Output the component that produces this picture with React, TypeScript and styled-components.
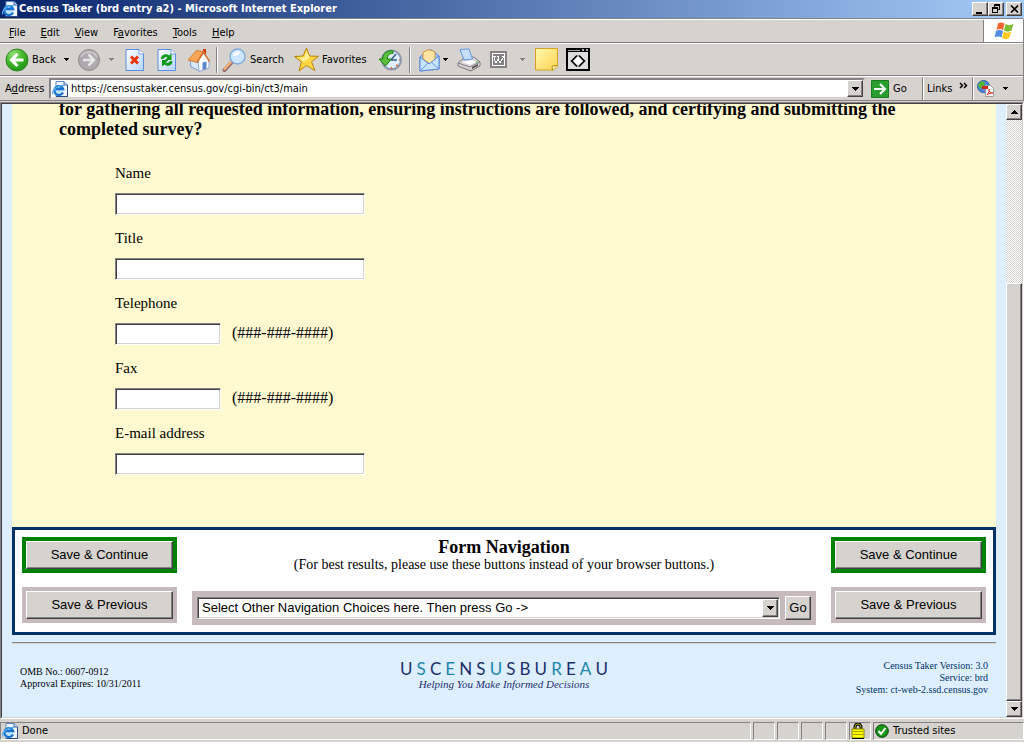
import React from "react";
import styled, { createGlobalStyle } from "styled-components";

const FACE = "#d6d3ce";
const SHADOW = "#848284";
const DARK = "#424142";
const NAVY = "#003366";

const GlobalStyle = createGlobalStyle`
  * { box-sizing: border-box; }
  body { margin: 0; background: ${FACE}; }
  button, input, select { font: inherit; color: inherit; margin: 0; padding: 0; border-radius: 0; }
`;

const Shell = styled.div`
  display: flex;
  flex-direction: column;
  height: 100vh;
  overflow: hidden;
  background: ${FACE};
  color: #000;
  font: 11px/14px "DejaVu Sans Condensed", "DejaVu Sans", sans-serif;
`;

const TitleBar = styled.header`
  display: flex;
  align-items: center;
  height: 18px;
  flex: none;
  padding: 0 2px;
  gap: 1px;
  background: linear-gradient(90deg, #08246b, #a5cbf7);
  color: #fff;
`;

const TitleText = styled.h1`
  margin: 0;
  flex: 1;
  font: bold 11px/18px "DejaVu Sans Condensed", "DejaVu Sans", sans-serif;
  white-space: nowrap;
`;

const Raised = styled.button`
  display: flex;
  align-items: center;
  justify-content: center;
  background: ${FACE};
  color: #000;
  border: 1px solid;
  border-color: #fff ${DARK} ${DARK} #fff;
  box-shadow: inset -1px -1px 0 ${SHADOW};
`;

const WindowButtons = styled.div`
  display: flex;
  & > :last-child { margin-left: 2px; }
`;

const WindowButton = styled(Raised)`
  width: 16px;
  height: 14px;
`;

const Bars = styled.div`
  flex: none;
  margin-top: 1px;
  border-right: 1px solid ${SHADOW};
`;

const Bar = styled.div<{ $h: number }>`
  display: flex;
  align-items: center;
  height: ${(p) => p.$h}px;
  border-top: 1px solid #fff;
  border-bottom: 1px solid ${SHADOW};
  box-shadow: 0 -1px 0 ${SHADOW};
`;

const MenuNav = styled.nav`
  display: flex;
  flex: 1;
  gap: 15px;
  padding: 3px 0 0 9px;
`;

const MenuItem = styled.button`
  border: 0;
  background: none;
`;

const Throbber = styled.div`
  display: flex;
  align-items: center;
  justify-content: center;
  align-self: stretch;
  width: 40px;
  background: #fff;
  border-left: 1px solid ${SHADOW};
`;

const Tools = styled.div`
  display: flex;
  align-items: center;
  padding-left: 3px;
`;

const Tool = styled.button<{ $w: number; $mid?: boolean }>`
  display: flex;
  align-items: center;
  justify-content: ${(p) => (p.$mid ? "center" : "flex-start")};
  gap: 3px;
  width: ${(p) => p.$w}px;
  height: 26px;
  padding: 0 2px;
  border: 0;
  background: none;
  white-space: nowrap;
  svg { flex: none; }
`;

const CaretBox = styled.span`
  display: flex;
  margin-left: 5px;
`;

const Divider = styled.span`
  width: 2px;
  height: 26px;
  margin: 0 2px;
  background: linear-gradient(90deg, ${SHADOW} 50%, #fff 50%);
`;

const AddressLabel = styled.label`
  width: 49px;
  padding-left: 5px;
`;

const AddressField = styled.div`
  display: flex;
  align-items: center;
  flex: 1;
  height: 21px;
  background: #fff;
  border: 2px solid;
  border-color: ${SHADOW} ${FACE} ${FACE} ${SHADOW};
  padding-left: 1px;
  gap: 3px;
`;

const AddressInput = styled.input`
  flex: 1;
  min-width: 0;
  border: 0;
  outline: 0;
  background: none;
`;

const DropButton = styled(Raised)`
  width: 16px;
  height: 17px;
`;

const AddressTool = styled.button<{ $w: number; $gap: number; $line?: boolean }>`
  display: flex;
  align-items: center;
  gap: ${(p) => p.$gap}px;
  align-self: stretch;
  width: ${(p) => p.$w}px;
  padding-left: ${(p) => (p.$line ? 4 : 6)}px;
  border: 0;
  border-left: ${(p) => (p.$line ? `1px solid ${SHADOW}` : "0")};
  box-shadow: ${(p) => (p.$line ? "inset 1px 0 0 #fff" : "none")};
  background: none;
`;

const Frame = styled.div`
  display: flex;
  flex: 1;
  min-height: 0;
  margin-top: 1px;
  border: 1px solid;
  border-color: ${SHADOW} #fff #fff ${SHADOW};
`;

const FrameInner = styled.div`
  display: flex;
  flex: 1;
  min-width: 0;
  border: 1px solid;
  border-color: ${DARK} ${FACE} ${FACE} ${DARK};
`;

const Page = styled.main`
  flex: 1;
  min-width: 0;
  overflow: hidden;
  padding: 0 10px;
  background: #ddeeff;
  font-family: "Liberation Serif", serif;
`;

const Survey = styled.form`
  background: #fff9cf;
  padding: 0 47px 52px;
`;

const Question = styled.h2`
  margin: -5px 0 24px;
  font-size: 18px;
  line-height: 20px;
`;

const Fields = styled.div`
  display: flex;
  flex-direction: column;
  gap: 13px;
  padding-left: 56px;
  font-size: 15px;
  line-height: 20px;
`;

const Field = styled.div`
  display: flex;
  flex-direction: column;
  gap: 10px;
`;

const FieldRow = styled.div`
  display: flex;
  gap: 11px;
  height: 22px;
`;

const Hint = styled.span`
  font-size: 16px;
`;

const TextInput = styled.input<{ $short?: boolean }>`
  width: ${(p) => (p.$short ? 106 : 250)}px;
  height: 22px;
  padding: 0 2px;
  outline: 0;
  background: #fff;
  border: 1px solid;
  border-color: ${SHADOW} #fff #fff ${SHADOW};
  box-shadow: inset 1px 1px 0 ${DARK}, inset -1px -1px 0 ${FACE};
`;

const NavBox = styled.section`
  display: grid;
  grid-template-columns: 155px 1fr 155px;
  gap: 15px;
  padding: 7px;
  border: 3px solid ${NAVY};
  background: #fff;
`;

const ButtonColumn = styled.div`
  display: flex;
  flex-direction: column;
  gap: 14px;
`;

const SaveButton = styled.button<{ $primary?: boolean }>`
  display: block;
  height: 36px;
  padding: 0;
  border: 4px solid ${(p) => (p.$primary ? "#008200" : "#c6babd")};
  background: none;
  font: 13px/26px "Liberation Sans", Arial, sans-serif;
`;

const ButtonFace = styled.span`
  display: block;
  height: 28px;
  background: ${FACE};
  border: 1px solid;
  border-color: #fff ${DARK} ${DARK} #fff;
  box-shadow: inset -1px -1px 0 ${SHADOW};
`;

const NavCenter = styled.div`
  display: flex;
  flex-direction: column;
  text-align: center;
`;

const NavTitle = styled.h3`
  margin: 0;
  font-size: 18px;
  line-height: 20px;
`;

const NavNote = styled.p`
  margin: 0 0 18px;
  font-size: 14px;
  line-height: 16px;
`;

const ChoiceBar = styled.div`
  display: flex;
  align-items: center;
  gap: 5px;
  height: 34px;
  padding: 0 5px;
  background: #c6babd;
  font: 13px/16px "Liberation Sans", Arial, sans-serif;
`;

const SelectWrap = styled.div`
  position: relative;
  flex: 1;
  height: 22px;
`;

const Select = styled.select`
  appearance: none;
  display: block;
  width: 100%;
  height: 22px;
  padding: 0 20px 0 4px;
  outline: 0;
  background: #fff;
  border: 1px solid;
  border-color: ${SHADOW} #fff #fff ${SHADOW};
  box-shadow: inset 1px 1px 0 ${DARK}, inset -1px -1px 0 ${FACE};
`;

const SelectArrow = styled.span`
  position: absolute;
  top: 2px;
  right: 2px;
  width: 16px;
  height: 18px;
  display: flex;
  align-items: center;
  justify-content: center;
  pointer-events: none;
  background: ${FACE};
  border: 1px solid;
  border-color: #fff ${DARK} ${DARK} #fff;
  box-shadow: inset -1px -1px 0 ${SHADOW};
`;

const GoButton = styled(Raised)`
  width: 26px;
  height: 24px;
`;

const Rule = styled.hr`
  height: 2px;
  margin: 7px 0 0;
  border: 0;
  border-top: 1px solid ${SHADOW};
  border-bottom: 1px solid ${FACE};
`;

const Footer = styled.footer`
  display: grid;
  grid-template-columns: 1fr auto 1fr;
  align-items: center;
  padding: 16px 8px 0;
  font-size: 10px;
  line-height: 12px;
`;

const VersionInfo = styled.p`
  margin: 0;
  text-align: right;
  color: ${NAVY};
`;

const ApprovalInfo = styled.p`
  margin: 0;
`;

const Brand = styled.div`
  display: flex;
  flex-direction: column;
  align-self: start;
  width: 208px;
`;

const BrandName = styled.div`
  display: flex;
  justify-content: space-between;
  font: 17px/18px Lato, sans-serif;
  color: #21306b;
`;

const BrandLetter = styled.span<{ $light: boolean }>`
  color: ${(p) => (p.$light ? "#2186ad" : "#21306b")};
`;

const Tagline = styled.em`
  text-align: center;
  font-size: 11px;
  line-height: 12px;
  color: #21306b;
`;

const ScrollBar = styled.div`
  display: flex;
  flex-direction: column;
  flex: none;
  width: 16px;
  background: repeating-conic-gradient(#fff 0% 25%, ${FACE} 0% 50%) 0 0 / 2px 2px;
`;

const ScrollButton = styled(Raised)`
  flex: none;
  width: 16px;
  height: 16px;
`;

const Track = styled.div`
  display: flex;
  flex: 1;
  align-items: flex-end;
`;

const Thumb = styled.div`
  width: 16px;
  height: 72%;
  background: ${FACE};
  border: 1px solid;
  border-color: #fff ${DARK} ${DARK} #fff;
  box-shadow: inset -1px -1px 0 ${SHADOW};
`;

const StatusBar = styled.div`
  display: flex;
  flex: none;
  gap: 2px;
  padding: 3px 0 2px;
  border-bottom: 2px solid #fff;
`;

const StatusCell = styled.div<{ $w?: number }>`
  display: flex;
  align-items: center;
  gap: 4px;
  height: 18px;
  ${(p) => (p.$w ? `width: ${p.$w}px;` : "flex: 1;")}
  padding-left: 1px;
  border: 1px solid;
  border-color: ${SHADOW} #fff #fff ${SHADOW};
`;

const Caret = ({ dim }: { dim?: boolean }) => (
  <svg width="5" height="3" shapeRendering="crispEdges" aria-hidden="true">
    <path d="M0 0h5v1H0zM1 1h3v1H1zM2 2h1v1H2z" fill={dim ? SHADOW : "#000"} />
  </svg>
);

const Arrow = ({ up }: { up?: boolean }) => (
  <svg width="7" height="4" shapeRendering="crispEdges" aria-hidden="true">
    <path d={up ? "M3 0h1v1H3zM2 1h3v1H2zM1 2h5v1H1zM0 3h7v1H0z" : "M0 0h7v1H0zM1 1h5v1H1zM2 2h3v1H2zM3 3h1v1H3z"} />
  </svg>
);

const PageIcon = () => (
  <svg width="16" height="16" viewBox="0 0 16 16" aria-hidden="true">
    <path d="M4 .5h8l3.500 3.500v11.500H4z" fill="#eef5ff" stroke="#5a86c6" />
    <path d="M12 .5V4h3.500" fill="#b5cff7" stroke="#4a69a5" />
    <path d="M15.500 4v11.500H4" fill="none" stroke="#31497b" />
    <circle cx="6.500" cy="9" r="5" fill="#bde3ff" />
    <path d="M11 11.500a4.500 4.500 0 1 1 .2-3.300H4" fill="none" stroke="#1871ce" strokeWidth="2.200" />
    <path d="M1 13.500C-1 10 5 4 12 4.500" fill="none" stroke="#52aef7" strokeWidth="1.200" />
  </svg>
);

const BackIcon = () => (
  <svg width="24" height="24" viewBox="0 0 24 24" aria-hidden="true">
    <defs>
      <radialGradient id="gBack" cx=".35" cy=".25" r=".85">
        <stop offset="0" stopColor="#9be07b" /><stop offset=".5" stopColor="#42b629" /><stop offset="1" stopColor="#188a10" />
      </radialGradient>
    </defs>
    <circle cx="12" cy="12" r="11" fill="url(#gBack)" stroke="#31862a" />
    <path d="M12.500 6L6.500 12l6 6M7 12h11.500" fill="none" stroke="#fff" strokeWidth="3" />
  </svg>
);

const ForwardIcon = () => (
  <svg width="24" height="24" viewBox="0 0 24 24" aria-hidden="true">
    <circle cx="12" cy="12" r="10.500" fill="#adaaad" stroke="#8c8e8c" />
    <path d="M4 9a9 9 0 0 1 16 0" fill="none" stroke="#c9c7c9" strokeWidth="2" />
    <path d="M11.500 6.500L17 12l-5.500 5.500M16.500 12H6" fill="none" stroke="#e7e7e7" strokeWidth="2.500" />
  </svg>
);

const Sheet = ({ children }: { children: React.ReactNode }) => (
  <svg width="20" height="24" viewBox="0 0 20 24" aria-hidden="true">
    <defs>
      <linearGradient id="gSheet" x1="0" y1="0" x2="1" y2="1"><stop offset="0" stopColor="#fff" /><stop offset="1" stopColor="#b5d3ff" /></linearGradient>
    </defs>
    <path d="M1 1.500h13l4.500 4.500v16.500H1z" fill="url(#gSheet)" stroke="#5a8ede" />
    <path d="M14 1.500V6h4.500" fill="#fff" stroke="#7ba6e7" />
    {children}
  </svg>
);

const HomeIcon = () => (
  <svg width="24" height="24" viewBox="0 0 24 24" aria-hidden="true">
    <path d="M16 1h3v8h-3z" fill="#ce3810" />
    <path d="M3 12l8 2 2 9-9-4z" fill="#d6e7ff" stroke="#7b9ed6" />
    <path d="M11 12l6-7 5 8v7l-10 3.500z" fill="#fff" stroke="#8ca6d6" />
    <path d="M15.500 14.500l4-1v7l-4 1.500z" fill="#5a86ce" />
    <path d="M1 12L9.500 2.500 16 3.500l-6 11z" fill="#f7a65a" stroke="#de7d31" />
    <path d="M10 14.500L16.500 4l6 9.500" fill="none" stroke="#d67131" strokeWidth="1.500" />
  </svg>
);

const SearchIcon = () => (
  <svg width="25" height="24" viewBox="0 0 25 24" aria-hidden="true">
    <path d="M10 14l-7.500 8" stroke="#946d63" strokeWidth="4" strokeLinecap="round" />
    <path d="M9.500 13.500L2.500 21" stroke="#f7b27b" strokeWidth="2" strokeLinecap="round" />
    <circle cx="15.500" cy="8.500" r="7.500" fill="#cee7ff" stroke="#84aade" strokeWidth="1.500" />
    <path d="M11 8a5 5 0 0 1 7-4c-1 3-4 4-7 4z" fill="#fff" />
  </svg>
);

const StarIcon = () => (
  <svg width="25" height="25" viewBox="0 0 25 25" aria-hidden="true">
    <path d="M12.500 1l3 8 9 .3-7 5.400 3.500 9-8.500-5.200L5 24l2.500-9L.5 9.500l8.500-.5z" fill="#ffd742" stroke="#b58210" strokeLinejoin="round" />
    <path d="M12.500 4l-2 6.500-6 .2 5 4 6-4z" fill="#fff29c" />
  </svg>
);

const HistoryIcon = () => (
  <svg width="24" height="24" viewBox="0 0 24 24" aria-hidden="true">
    <circle cx="13.500" cy="12" r="9.500" fill="#deefff" stroke="#8c96ad" strokeWidth="2" />
    <path d="M13 12l5-6M13 12h6" stroke="#395d84" strokeWidth="1.500" />
    <path d="M21 12h1M13.500 19v2M18 17l2 1" stroke="#d66531" strokeWidth="1.500" />
    <path d="M15 3C9 2 5 5 4.500 11H1l6.500 7 6-7h-4c0-4 2-5.500 5.500-5.500z" fill="#5abe39" stroke="#187d18" />
  </svg>
);

const MailIcon = () => (
  <svg width="21" height="24" viewBox="0 0 21 24" aria-hidden="true">
    <path d="M1 9l7-7h5l7 6v13L1 23z" fill="#9cc3f7" stroke="#5a86d6" />
    <path d="M4 11V4.500L9 1.500l7 2V11l-5 5z" fill="#ffe3a5" stroke="#d69642" />
    <path d="M1 9l9 7L20 8v13L1 23z" fill="#c6e3ff" stroke="#5a86d6" />
    <path d="M1 23l8-8M20 21l-8-7" stroke="#6396de" fill="none" />
  </svg>
);

const PrintIcon = () => (
  <svg width="24" height="24" viewBox="0 0 24 24" aria-hidden="true">
    <path d="M1 15l6-5 10-1 6 5v4l-9 5-13-5z" fill="#d6d3d6" stroke="#7b797b" />
    <path d="M3 1.500l9-.5 3.500 10-8.500 1z" fill="#c6dfff" stroke="#6396e7" />
    <path d="M1 15l12 4 10-5" fill="none" stroke="#848284" />
    <path d="M5 14l10-2 4 2-6 3z" fill="#fff" />
    <path d="M15 19l6-3v2l-6 3z" fill="#525152" />
    <path d="M19 14h2" stroke="#52b631" />
  </svg>
);

const EditIcon = () => (
  <svg width="17" height="17" viewBox="0 0 17 17" shapeRendering="crispEdges" aria-hidden="true">
    <path d="M0 0h17v17H0z" fill="#848284" />
    <path d="M2 2h12v12H2z" fill="none" stroke="#fff" />
    <path d="M4 5v3l2 4 2-4V5M8 8l2 4 3-5V5M3 5h3M7 5h2M12 5h2" fill="none" stroke="#fff" />
  </svg>
);

const NoteIcon = () => (
  <svg width="23" height="23" viewBox="0 0 23 23" aria-hidden="true">
    <defs><linearGradient id="gNote" x1="0" y1="0" x2="1" y2="1"><stop offset="0" stopColor="#fff7ad" /><stop offset="1" stopColor="#ffd352" /></linearGradient></defs>
    <path d="M.5.500h22V18l-4 4H.5z" fill="url(#gNote)" stroke="#d6a221" />
    <path d="M22 17.500l-5 .5.500 4.500" fill="#ffefa5" stroke="#bd8a18" />
  </svg>
);

const ConsoleIcon = () => (
  <svg width="24" height="23" viewBox="0 0 24 23" aria-hidden="true">
    <path d="M1 1h22v21H1z" fill="#deddde" stroke="#000" strokeWidth="2" />
    <path d="M0 0h24v4H0z" />
    <path d="M2 2h12v1H2zM16 1h2v2h-2zM20 1h2v2h-2z" fill="#adaaad" />
    <path d="M12 7.500l5.500 5.500-5.500 5.500L6.500 13z" fill="#fff" stroke="#848284" />
    <path d="M11 7.500L5.500 13l5.500 5.500M13 7.500l5.500 5.500-5.500 5.500" fill="none" stroke="#000" strokeWidth="1.500" />
  </svg>
);

const FlagIcon = () => (
  <svg width="20" height="18" viewBox="0 0 20 18" aria-hidden="true">
    <path d="M4 1.500C6 0 8 0 10.500 1.500L9 8C7 6.500 5 6.500 2.500 8z" fill="#f76531" />
    <path d="M11.500 2c2.500 1.500 5 1.500 8 0l-2 6.500c-2.500 1.500-5 1.500-7.500 0z" fill="#7bbe31" />
    <path d="M2 9c2.500-1.500 4.500-1.500 7 0l-1.500 6.500C5 14 3 14 .5 15.500z" fill="#528ee7" />
    <path d="M9.800 9.500c2.500 1.500 5 1.500 7.500 0l-2 6.500c-2.500 1.500-5 1.500-7.300 0z" fill="#ffc721" />
  </svg>
);

const GoIcon = () => (
  <svg width="18" height="18" viewBox="0 0 18 18" aria-hidden="true">
    <path d="M.5.500h17v17H.5z" fill="#299e31" stroke="#187d21" />
    <path d="M9 4l5 5-5 5M3 9h10.500" fill="none" stroke="#fff" strokeWidth="2" />
  </svg>
);

const PdfIcon = () => (
  <svg width="17" height="17" viewBox="0 0 17 17" aria-hidden="true">
    <circle cx="6.500" cy="6.500" r="6" fill="#4a86de" stroke="#31599c" />
    <path d="M4 1l4 1-1 4-4 3-2-4zM9 6l3-1-1 4-3 1z" fill="#52b639" />
    <path d="M8.500 5.500h5l3 3v8h-8z" fill="#fff" stroke="#9c9e9c" />
    <path d="M5 6h6v3H5z" fill="#d62418" />
    <path d="M10 15c2-3 2.500-4 2-6 0 3 1 4 4 4-2 0-4 .5-6 2z" fill="none" stroke="#de3029" />
  </svg>
);

const LockIcon = () => (
  <svg width="14" height="16" viewBox="0 0 14 16" aria-hidden="true">
    <path d="M4 7V4a3 3 0 0 1 6 0v3" fill="none" stroke="#000" strokeWidth="3" />
    <path d="M4 7V4a3 3 0 0 1 6 0v3" fill="none" stroke="#b5b200" />
    <path d="M1 6h12v9H1z" fill="#ffff00" stroke="#848200" />
    <path d="M2 8.500h10M2 11.500h10" stroke="#a5a200" />
    <path d="M1 15.500h12" stroke="#000" />
  </svg>
);

const CheckIcon = () => (
  <svg width="14" height="14" viewBox="0 0 14 14" aria-hidden="true">
    <circle cx="7" cy="7" r="6.300" fill="#189618" stroke="#083c08" />
    <path d="M3.500 7l2.500 3 4.500-6" fill="none" stroke="#fff" strokeWidth="2" />
  </svg>
);

const menus: [string, string, string][] = [
  ["", "F", "ile"], ["", "E", "dit"], ["", "V", "iew"], ["F", "a", "vorites"], ["", "T", "ools"], ["", "H", "elp"],
];

const fields = [
  { id: "name", label: "Name" },
  { id: "title", label: "Title" },
  { id: "telephone", label: "Telephone", hint: "(###-###-####)" },
  { id: "fax", label: "Fax", hint: "(###-###-####)" },
  { id: "email", label: "E-mail address" },
];

const brandLetters = "USCENSUSBUREAU".split("");
const lightLetters = [1, 3, 6, 10, 12];

const SaveButtons = () => (
  <ButtonColumn>
    <SaveButton type="button" $primary><ButtonFace>Save &amp; Continue</ButtonFace></SaveButton>
    <SaveButton type="button"><ButtonFace>Save &amp; Previous</ButtonFace></SaveButton>
  </ButtonColumn>
);

export default function App() {
  return (
    <Shell>
      <GlobalStyle />
      <TitleBar>
        <PageIcon />
        <TitleText>Census Taker (brd entry a2) - Microsoft Internet Explorer</TitleText>
        <WindowButtons>
          <WindowButton aria-label="Minimize">
            <svg width="10" height="9" shapeRendering="crispEdges"><path d="M1 7h6v2H1z" /></svg>
          </WindowButton>
          <WindowButton aria-label="Restore">
            <svg width="10" height="10" shapeRendering="crispEdges">
              <path d="M3 0h6v6H7V5h1V2H4v1H3zM1 3h6v6H1zM2 5v3h4V5z" fillRule="evenodd" />
            </svg>
          </WindowButton>
          <WindowButton aria-label="Close">
            <svg width="9" height="8"><path d="M1 .5l7 7M8 .5l-7 7" stroke="#000" strokeWidth="1.600" /></svg>
          </WindowButton>
        </WindowButtons>
      </TitleBar>
      <Bars>
        <Bar $h={24}>
          <MenuNav>
            {menus.map(([a, u, b]) => (
              <MenuItem key={a + u + b}>{a}<u>{u}</u>{b}</MenuItem>
            ))}
          </MenuNav>
          <Throbber><FlagIcon /></Throbber>
        </Bar>
        <Bar $h={33}>
          <Tools>
            <Tool $w={72}><BackIcon />Back<CaretBox><Caret /></CaretBox></Tool>
            <Tool $w={44} aria-label="Forward"><ForwardIcon /><CaretBox><Caret dim /></CaretBox></Tool>
            <Tool $w={32} $mid aria-label="Stop">
              <Sheet><path d="M6 8.500l7 7M13 8.500l-7 7" stroke="#e73408" strokeWidth="3" /></Sheet>
            </Tool>
            <Tool $w={32} $mid aria-label="Refresh">
              <Sheet>
                <path d="M4 11c0-5 6-6 8-3.500l2.500-2V12H8l2.500-2.500c-2-1-3 0-4 1.500z" fill="#109a18" />
                <path d="M15.500 13c0 5-6 6-8 3.500l-2.500 2V12h6.500L9 14.500c2 1 3 0 4-1.500z" fill="#109a18" />
              </Sheet>
            </Tool>
            <Tool $w={31} $mid aria-label="Home"><HomeIcon /></Tool>
            <Divider />
            <Tool $w={72}><SearchIcon />Search</Tool>
            <Tool $w={81}><StarIcon />Favorites</Tool>
            <Tool $w={34} $mid aria-label="History"><HistoryIcon /></Tool>
            <Divider />
            <Tool $w={40} $mid aria-label="Mail"><MailIcon /><Caret /></Tool>
            <Tool $w={32} $mid aria-label="Print"><PrintIcon /></Tool>
            <Tool $w={45} $mid aria-label="Edit"><EditIcon /><CaretBox><CaretBox><Caret dim /></CaretBox></CaretBox></Tool>
            <Tool $w={32} $mid aria-label="Discuss"><NoteIcon /></Tool>
            <Tool $w={32} $mid aria-label="Console"><ConsoleIcon /></Tool>
          </Tools>
        </Bar>
        <Bar $h={25}>
          <AddressLabel htmlFor="address">A<u>d</u>dress</AddressLabel>
          <AddressField>
            <PageIcon />
            <AddressInput id="address" defaultValue="https://censustaker.census.gov/cgi-bin/ct3/main" />
            <DropButton aria-label="Show addresses"><Arrow /></DropButton>
          </AddressField>
          <AddressTool $w={57} $gap={4}><GoIcon />Go</AddressTool>
          <AddressTool $w={50} $gap={7} $line>
            Links
            <svg width="9" height="13" aria-hidden="true"><path d="M1 1l2.500 2.500L1 6M5 1l2.500 2.500L5 6" fill="none" stroke="#000" strokeWidth="1.500" /></svg>
          </AddressTool>
          <AddressTool $w={51} $gap={9} $line aria-label="Convert to PDF"><PdfIcon /><Caret /></AddressTool>
        </Bar>
      </Bars>
      <Frame>
        <FrameInner>
          <Page>
            <Survey>
              <Question>
                for gathering all requested information, ensuring instructions are followed, and certifying and submitting the completed survey?
              </Question>
              <Fields>
                {fields.map((f) => (
                  <Field key={f.id}>
                    <label htmlFor={f.id}>{f.label}</label>
                    <FieldRow>
                      <TextInput id={f.id} $short={!!f.hint} />
                      {f.hint && <Hint>{f.hint}</Hint>}
                    </FieldRow>
                  </Field>
                ))}
              </Fields>
            </Survey>
            <NavBox>
              <SaveButtons />
              <NavCenter>
                <NavTitle>Form Navigation</NavTitle>
                <NavNote>(For best results, please use these buttons instead of your browser buttons.)</NavNote>
                <ChoiceBar>
                  <SelectWrap>
                    <Select aria-label="Other navigation choices">
                      <option>Select Other Navigation Choices here. Then press Go -&gt;</option>
                    </Select>
                    <SelectArrow><Arrow /></SelectArrow>
                  </SelectWrap>
                  <GoButton type="button">Go</GoButton>
                </ChoiceBar>
              </NavCenter>
              <SaveButtons />
            </NavBox>
            <Rule />
            <Footer>
              <ApprovalInfo>OMB No.: 0607-0912<br />Approval Expires: 10/31/2011</ApprovalInfo>
              <Brand>
                <BrandName>
                  {brandLetters.map((c, i) => (
                    <BrandLetter key={i} $light={lightLetters.includes(i)}>{c}</BrandLetter>
                  ))}
                </BrandName>
                <Tagline>Helping You Make Informed Decisions</Tagline>
              </Brand>
              <VersionInfo>Census Taker Version: 3.0<br />Service: brd<br />System: ct-web-2.ssd.census.gov</VersionInfo>
            </Footer>
          </Page>
          <ScrollBar>
            <ScrollButton aria-label="Scroll up"><Arrow up /></ScrollButton>
            <Track><Thumb /></Track>
            <ScrollButton aria-label="Scroll down"><Arrow /></ScrollButton>
          </ScrollBar>
        </FrameInner>
      </Frame>
      <StatusBar>
        <StatusCell><PageIcon />Done</StatusCell>
        <StatusCell $w={22} />
        <StatusCell $w={22} />
        <StatusCell $w={22} />
        <StatusCell $w={22} />
        <StatusCell $w={22}><LockIcon /></StatusCell>
        <StatusCell $w={151}><CheckIcon />Trusted sites</StatusCell>
      </StatusBar>
    </Shell>
  );
}
